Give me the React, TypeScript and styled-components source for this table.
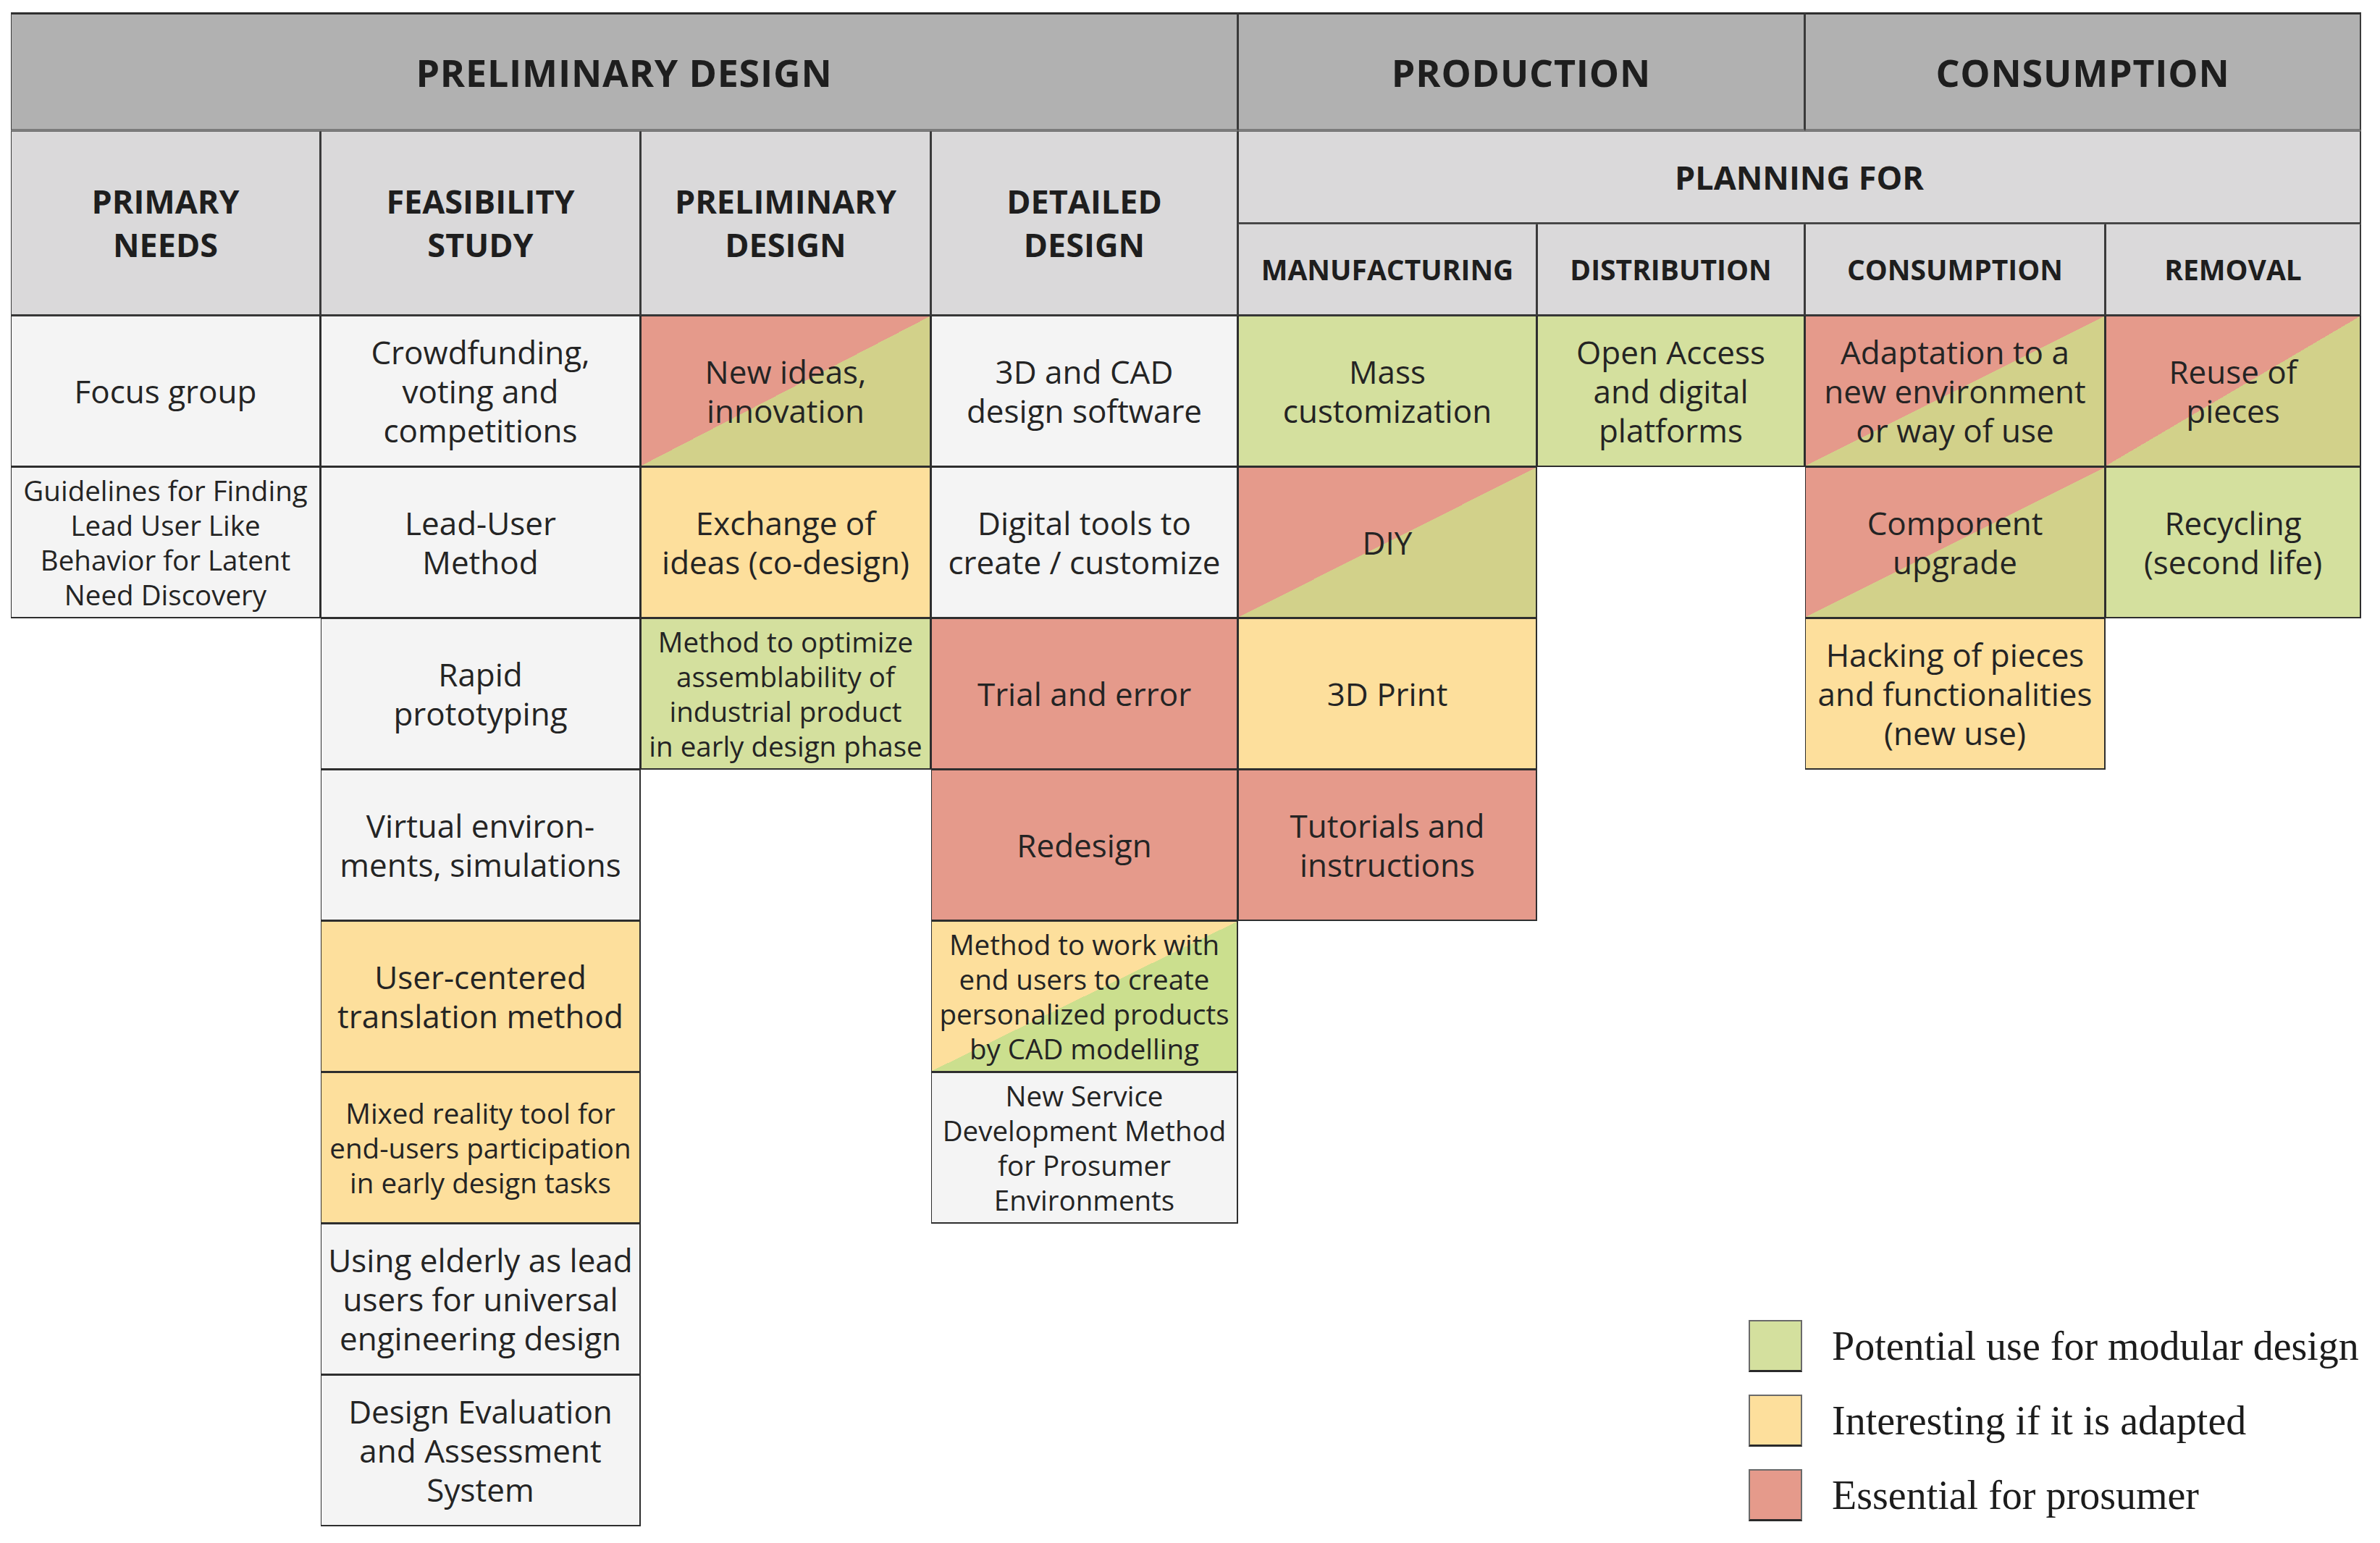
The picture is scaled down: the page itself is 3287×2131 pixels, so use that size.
import React from 'react';
import styled, { createGlobalStyle, css } from 'styled-components';

const GlobalStyle = createGlobalStyle`
  html, body { margin: 0; padding: 0; background: #ffffff; }
  body { font-family: "Open Sans", "Noto Sans", sans-serif; color: #1f1f1f; }
  #root { width: 3287px; height: 2131px; }
`;

type Tone = 'white' | 'green' | 'yellow' | 'red' | 'redGreen' | 'yellowGreen';

const toneBg: Record<Tone, string> = {
  white: '#f4f4f4',
  green: '#d4e09e',
  yellow: '#fddf9c',
  red: '#e59a8b',
  redGreen: 'linear-gradient(to bottom right, #e59a8b 50%, #d2d18a 50%)',
  yellowGreen: 'linear-gradient(to bottom right, #fddf9c 50%, #cbdf8e 50%)',
};

const Page = styled.div`
  width: 3287px;
  height: 2131px;
  padding: 17px 0 0 15px;
  box-sizing: border-box;
  background: #ffffff;
`;

const Matrix = styled.div`
  display: grid;
  grid-template-columns: 428px 442px 401px 424px 413px 370px 415px 353px;
  grid-template-rows: 164px 128px 127px repeat(8, 209px);
`;

interface AreaProps {
  $col: string;
  $row: string;
}

const area = css<AreaProps>`
  grid-column: ${(p) => p.$col};
  grid-row: ${(p) => p.$row};
  box-sizing: border-box;
  display: flex;
  align-items: center;
  justify-content: center;
  text-align: center;
  white-space: nowrap;
`;

const PhaseHeader = styled.div<AreaProps>`
  ${area};
  background: #b1b1b1;
  border-top: 3px solid #2f2f2f;
  border-left: 1px solid #3a3a3a;
  border-right: 2px solid #3a3a3a;
  border-bottom: 3px solid #7c7c7c;
  font-weight: 700;
  font-size: 52px;
  letter-spacing: 0.8px;
  color: #1e1e1e;
`;

const StageHeader = styled.div<AreaProps & { $minor?: boolean }>`
  ${area};
  background: #dad9da;
  border-left: 1px solid #3a3a3a;
  border-right: 2px solid #3a3a3a;
  border-bottom: 2px solid #3a3a3a;
  border-top: 1px solid #6e6e6e;
  font-weight: 700;
  font-size: ${(p) => (p.$minor ? '39px' : '45px')};
  line-height: ${(p) => (p.$minor ? '46px' : '60px')};
  color: #1e1e1e;
`;

const DataCell = styled.div<AreaProps & { $tone: Tone; $small?: boolean }>`
  ${area};
  background: ${(p) => toneBg[p.$tone]};
  border-top: 1px solid #2e2e2e;
  border-left: 1px solid #2e2e2e;
  border-right: 2px solid #2e2e2e;
  border-bottom: 2px solid #2e2e2e;
  font-weight: 400;
  font-size: ${(p) => (p.$small ? '38.5px' : '44px')};
  line-height: ${(p) => (p.$small ? '48px' : '54px')};
  color: #242424;
  padding: 0 4px;
`;

const Legend = styled.div`
  grid-column: 6 / 9;
  grid-row: 10 / 12;
  align-self: end;
  justify-self: start;
  margin: 0 0 7px 292px;
  display: flex;
  flex-direction: column;
  gap: 31px;
`;

const LegendRow = styled.div`
  display: flex;
  align-items: center;
  gap: 41px;
`;

const Swatch = styled.span<{ $tone: Tone }>`
  width: 74px;
  height: 72px;
  box-sizing: border-box;
  background: ${(p) => toneBg[p.$tone]};
  border: 2px solid #6a6a6a;
  border-bottom: 3px solid #2a2a2a;
  flex: none;
`;

const LegendLabel = styled.span`
  font-family: "Liberation Serif", "Times New Roman", serif;
  font-size: 56px;
  color: #1c1c1c;
  white-space: nowrap;
`;

interface CellDef {
  col: number;
  row: number;
  tone: Tone;
  small?: boolean;
  lines: string[];
}

const cells: CellDef[] = [
  { col: 1, row: 4, tone: 'white', lines: ['Focus group'] },
  { col: 2, row: 4, tone: 'white', lines: ['Crowdfunding,', 'voting and', 'competitions'] },
  { col: 3, row: 4, tone: 'redGreen', lines: ['New ideas,', 'innovation'] },
  { col: 4, row: 4, tone: 'white', lines: ['3D and CAD', 'design software'] },
  { col: 5, row: 4, tone: 'green', lines: ['Mass', 'customization'] },
  { col: 6, row: 4, tone: 'green', lines: ['Open Access', 'and digital', 'platforms'] },
  { col: 7, row: 4, tone: 'redGreen', lines: ['Adaptation to a', 'new environment', 'or way of use'] },
  { col: 8, row: 4, tone: 'redGreen', lines: ['Reuse of', 'pieces'] },

  { col: 1, row: 5, tone: 'white', small: true, lines: ['Guidelines for Finding', 'Lead User Like', 'Behavior for Latent', 'Need Discovery'] },
  { col: 2, row: 5, tone: 'white', lines: ['Lead-User', 'Method'] },
  { col: 3, row: 5, tone: 'yellow', lines: ['Exchange of', 'ideas (co-design)'] },
  { col: 4, row: 5, tone: 'white', lines: ['Digital tools to', 'create / customize'] },
  { col: 5, row: 5, tone: 'redGreen', lines: ['DIY'] },
  { col: 7, row: 5, tone: 'redGreen', lines: ['Component', 'upgrade'] },
  { col: 8, row: 5, tone: 'green', lines: ['Recycling', '(second life)'] },

  { col: 2, row: 6, tone: 'white', lines: ['Rapid', 'prototyping'] },
  { col: 3, row: 6, tone: 'green', small: true, lines: ['Method to optimize', 'assemblability of', 'industrial product', 'in early design phase'] },
  { col: 4, row: 6, tone: 'red', lines: ['Trial and error'] },
  { col: 5, row: 6, tone: 'yellow', lines: ['3D Print'] },
  { col: 7, row: 6, tone: 'yellow', lines: ['Hacking of pieces', 'and functionalities', '(new use)'] },

  { col: 2, row: 7, tone: 'white', lines: ['Virtual environ-', 'ments, simulations'] },
  { col: 4, row: 7, tone: 'red', lines: ['Redesign'] },
  { col: 5, row: 7, tone: 'red', lines: ['Tutorials and', 'instructions'] },

  { col: 2, row: 8, tone: 'yellow', lines: ['User-centered', 'translation method'] },
  { col: 4, row: 8, tone: 'yellowGreen', small: true, lines: ['Method to work with', 'end users to create', 'personalized products', 'by CAD modelling'] },

  { col: 2, row: 9, tone: 'yellow', small: true, lines: ['Mixed reality tool for', 'end-users participation', 'in early design tasks'] },
  { col: 4, row: 9, tone: 'white', small: true, lines: ['New Service', 'Development Method', 'for Prosumer', 'Environments'] },

  { col: 2, row: 10, tone: 'white', lines: ['Using elderly as lead', 'users for universal', 'engineering design'] },
  { col: 2, row: 11, tone: 'white', lines: ['Design Evaluation', 'and Assessment', 'System'] },
];

const stages = [
  { col: 1, lines: ['PRIMARY', 'NEEDS'] },
  { col: 2, lines: ['FEASIBILITY', 'STUDY'] },
  { col: 3, lines: ['PRELIMINARY', 'DESIGN'] },
  { col: 4, lines: ['DETAILED', 'DESIGN'] },
];

const planning = ['MANUFACTURING', 'DISTRIBUTION', 'CONSUMPTION', 'REMOVAL'];

const legend: { tone: Tone; label: string }[] = [
  { tone: 'green', label: 'Potential use for modular design' },
  { tone: 'yellow', label: 'Interesting if it is adapted' },
  { tone: 'red', label: 'Essential for prosumer' },
];

const Lines: React.FC<{ lines: string[] }> = ({ lines }) => (
  <span>
    {lines.map((l, i) => (
      <React.Fragment key={i}>
        {i > 0 && <br />}
        {l}
      </React.Fragment>
    ))}
  </span>
);

export default function App() {
  return (
    <>
      <GlobalStyle />
      <Page>
        <Matrix>
          <PhaseHeader $col="1 / 5" $row="1">PRELIMINARY DESIGN</PhaseHeader>
          <PhaseHeader $col="5 / 7" $row="1">PRODUCTION</PhaseHeader>
          <PhaseHeader $col="7 / 9" $row="1">CONSUMPTION</PhaseHeader>

          {stages.map((s) => (
            <StageHeader key={s.col} $col={`${s.col}`} $row="2 / 4">
              <Lines lines={s.lines} />
            </StageHeader>
          ))}
          <StageHeader $col="5 / 9" $row="2">PLANNING FOR</StageHeader>
          {planning.map((p, i) => (
            <StageHeader key={p} $col={`${i + 5}`} $row="3" $minor>
              {p}
            </StageHeader>
          ))}

          {cells.map((c, i) => (
            <DataCell key={i} $col={`${c.col}`} $row={`${c.row}`} $tone={c.tone} $small={c.small}>
              <Lines lines={c.lines} />
            </DataCell>
          ))}

          <Legend>
            {legend.map((l) => (
              <LegendRow key={l.label}>
                <Swatch $tone={l.tone} />
                <LegendLabel>{l.label}</LegendLabel>
              </LegendRow>
            ))}
          </Legend>
        </Matrix>
      </Page>
    </>
  );
}
